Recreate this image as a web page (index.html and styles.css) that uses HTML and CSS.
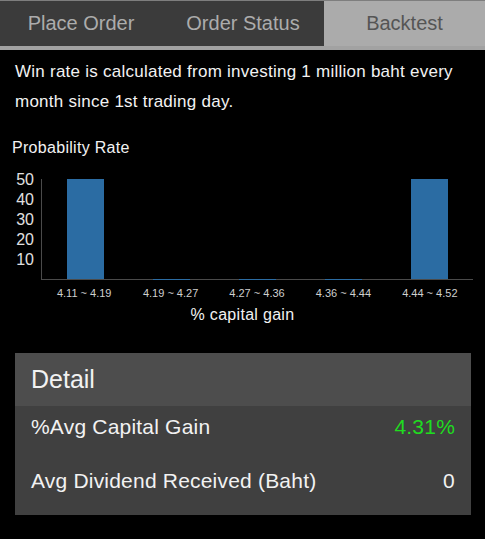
FILE: index.html
```html
<!DOCTYPE html>
<html>
<head>
<meta charset="utf-8">
<link rel="stylesheet" href="styles.css">
</head>
<body>
<div class="tabs">
  <div class="tab">Place Order</div>
  <div class="tab">Order Status</div>
  <div class="tab active">Backtest</div>
</div>
<p class="intro">Win rate is calculated from investing 1 million baht every month since 1st trading day.</p>
<div class="chart-title">Probability Rate</div>
<div class="chart">
  <div class="yaxis">
    <div>50</div><div>40</div><div>30</div><div>20</div><div>10</div>
  </div>
  <div class="plot-wrap">
    <div class="plot">
      <div class="band"><div class="bar" style="height:100px"></div></div>
      <div class="band"><div class="bar zero"></div></div>
      <div class="band"><div class="bar zero"></div></div>
      <div class="band"><div class="bar zero"></div></div>
      <div class="band"><div class="bar" style="height:100px"></div></div>
    </div>
    <div class="xlabels">
      <div>4.11 ~ 4.19</div>
      <div>4.19 ~ 4.27</div>
      <div>4.27 ~ 4.36</div>
      <div>4.36 ~ 4.44</div>
      <div>4.44 ~ 4.52</div>
    </div>
  </div>
</div>
<div class="xtitle">% capital gain</div>
<div class="card">
  <div class="card-head">Detail</div>
  <div class="card-body">
    <div class="row"><span>%Avg Capital Gain</span><span class="green">4.31%</span></div>
    <div class="row"><span>Avg Dividend Received (Baht)</span><span>0</span></div>
  </div>
</div>
</body>
</html>
```
FILE: styles.css
```css
html, body {
  margin: 0;
  padding: 0;
  background: #000;
  color: #f2f2f2;
  font-family: "Liberation Sans", Arial, sans-serif;
}
.tabs {
  display: grid;
  grid-template-columns: 162px 162px 1fr;
  border-top: 1px solid #7e7e7e;
  border-bottom: 4px solid #a2a2a2;
  background: #3b3b3b;
}
.tab {
  height: 45px;
  line-height: 45px;
  text-align: center;
  font-size: 20px;
  color: #acacac;
}
.tab.active {
  background: #ababab;
  color: #555;
}
.intro {
  margin: 7px 0 0;
  padding: 0 15px;
  font-size: 17px;
  letter-spacing: 0.25px;
  line-height: 30px;
}
.chart-title {
  margin-top: 21px;
  padding-left: 12px;
  font-size: 16px;
  letter-spacing: 0.3px;
  line-height: 20px;
}
.chart {
  display: flex;
  align-items: flex-start;
  margin-top: 12px;
}
.yaxis {
  width: 34px;
  padding-right: 7px;
  text-align: right;
  font-size: 16px;
  line-height: 20px;
  color: #e0e0e0;
}
.plot-wrap {
  width: 432px;
  margin-top: 9px;
}
.plot {
  display: flex;
  height: 100px;
  border-left: 1px solid #4a4a4a;
  border-bottom: 1px solid #4a4a4a;
}
.band {
  flex: 1;
  display: flex;
  justify-content: center;
  align-items: flex-end;
}
.bar {
  width: 37px;
  background: #2b6ca3;
}
.bar.zero {
  height: 1px;
  margin-bottom: -1px;
}
.xlabels {
  display: flex;
  margin-top: 6px;
  font-size: 11px;
  line-height: 14px;
  color: #cfcfcf;
}
.xlabels div {
  flex: 1;
  text-align: center;
}
.xtitle {
  margin-top: 5px;
  text-align: center;
  font-size: 16px;
  letter-spacing: 0.3px;
  line-height: 20px;
}
.card {
  margin: 28px 14px 0 15px;
  background: #404040;
}
.card-head {
  height: 53px;
  line-height: 53px;
  padding-left: 16px;
  font-size: 25px;
  background: #4d4d4d;
}
.card-body {
  padding: 9px 16px 22px 16px;
  display: flex;
  flex-direction: column;
  gap: 30px;
}
.row {
  display: flex;
  justify-content: space-between;
  font-size: 21px;
  letter-spacing: 0.2px;
  line-height: 24px;
}
.green {
  color: #1fdc1f;
}
```
